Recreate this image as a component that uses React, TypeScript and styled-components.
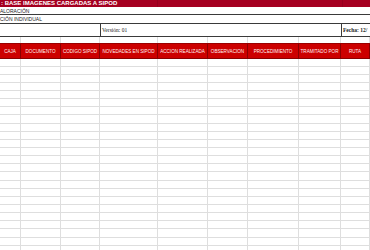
import React from "react";
import styled, { createGlobalStyle } from "styled-components";

const GlobalStyle = createGlobalStyle`
  html, body { margin: 0; padding: 0; background: #ffffff; }
  body { width: 370px; height: 250px; overflow: hidden; font-family: "Liberation Sans", Arial, sans-serif; }
  * { box-sizing: border-box; }
`;

const COLS = "21px 40px 39px 58px 50px 40px 51px 42px 29px";

const Sheet = styled.div`
  width: 370px;
  height: 250px;
  overflow: hidden;
  display: flex;
  flex-direction: column;
  & > * { flex-shrink: 0; }
`;

const TitleBar = styled.div`
  height: 7px;
  background: #a50021;
  color: #ffffff;
  font-weight: 700;
  font-size: 6px;
  line-height: 7px;
  padding-left: 1px;
  white-space: nowrap;
  overflow: hidden;
  display: grid;
  grid-template-columns: 157px 185px 27px;
`;

const TitleCell = styled.div<{ $divider?: boolean }>`
  border-right: ${(p) => (p.$divider ? "1px solid #95001d" : "none")};
  overflow: visible;
`;

const InfoRow = styled.div<{ $h: number }>`
  height: ${(p) => p.$h}px;
  border-bottom: 1px solid #3a3a3a;
  font-size: 5px;
  color: #222222;
  display: flex;
  align-items: center;
  white-space: nowrap;
  overflow: hidden;
`;

const MetaRow = styled.div`
  height: 13px;
  border-bottom: 1px solid #3a3a3a;
  display: grid;
  grid-template-columns: 100px 241px 29px;
`;

const MetaCell = styled.div<{ $bold?: boolean; $border?: boolean }>`
  border-left: ${(p) => (p.$border ? "1px solid #3a3a3a" : "none")};
  font-family: "Liberation Serif", "Times New Roman", serif;
  font-size: 5.5px;
  font-weight: ${(p) => (p.$bold ? 700 : 400)};
  color: #222222;
  display: flex;
  align-items: center;
  padding-left: 1px;
  white-space: nowrap;
  overflow: hidden;
`;

const GridRow = styled.div<{ $h: string }>`
  height: ${(p) => p.$h};
  display: grid;
  grid-template-columns: ${COLS};
`;

const GridCell = styled.div<{ $bottom?: boolean }>`
  border-right: 1px solid #dedede;
  border-bottom: ${(p) => (p.$bottom ? "1px solid #dedede" : "none")};
`;

const HeaderRow = styled.div`
  height: 16px;
  display: grid;
  grid-template-columns: ${COLS};
  background: #cc0000;
  border-top: 1px solid #9a0000;
  border-bottom: 1px solid #8a0000;
`;

const HeaderCell = styled.div`
  border-right: 1px solid #8a0000;
  color: #fff2f2;
  font-size: 4.6px;
  display: flex;
  align-items: center;
  justify-content: center;
  white-space: nowrap;
  overflow: hidden;
  text-transform: uppercase;
`;

const headers = [
  "CAJA",
  "DOCUMENTO",
  "CODIGO SIPOD",
  "NOVEDADES EN SIPOD",
  "ACCION REALIZADA",
  "OBSERVACION",
  "PROCEDIMIENTO",
  "TRAMITADO POR",
  "RUTA",
];

export default function App() {
  const rows = Array.from({ length: 25 });
  return (
    <>
      <GlobalStyle />
      <Sheet>
        <TitleBar>
          <TitleCell $divider>: BASE IMAGENES CARGADAS A SIPOD</TitleCell>
          <TitleCell $divider />
          <TitleCell />
        </TitleBar>
        <InfoRow $h={8}>ALORACIÓN</InfoRow>
        <InfoRow $h={9}>CIÓN INDIVIDUAL</InfoRow>
        <MetaRow>
          <MetaCell />
          <MetaCell $border>Versión: 01</MetaCell>
          <MetaCell $border $bold>Fecha: 12/</MetaCell>
        </MetaRow>
        <GridRow $h="6px">
          {headers.map((h) => (
            <GridCell key={h} />
          ))}
        </GridRow>
        <HeaderRow>
          {headers.map((h) => (
            <HeaderCell key={h}>{h}</HeaderCell>
          ))}
        </HeaderRow>
        {rows.map((_, i) => (
          <GridRow key={i} $h={i === 0 ? "7.6px" : "8.15px"}>
            {headers.map((h) => (
              <GridCell key={h} $bottom />
            ))}
          </GridRow>
        ))}
      </Sheet>
    </>
  );
}
